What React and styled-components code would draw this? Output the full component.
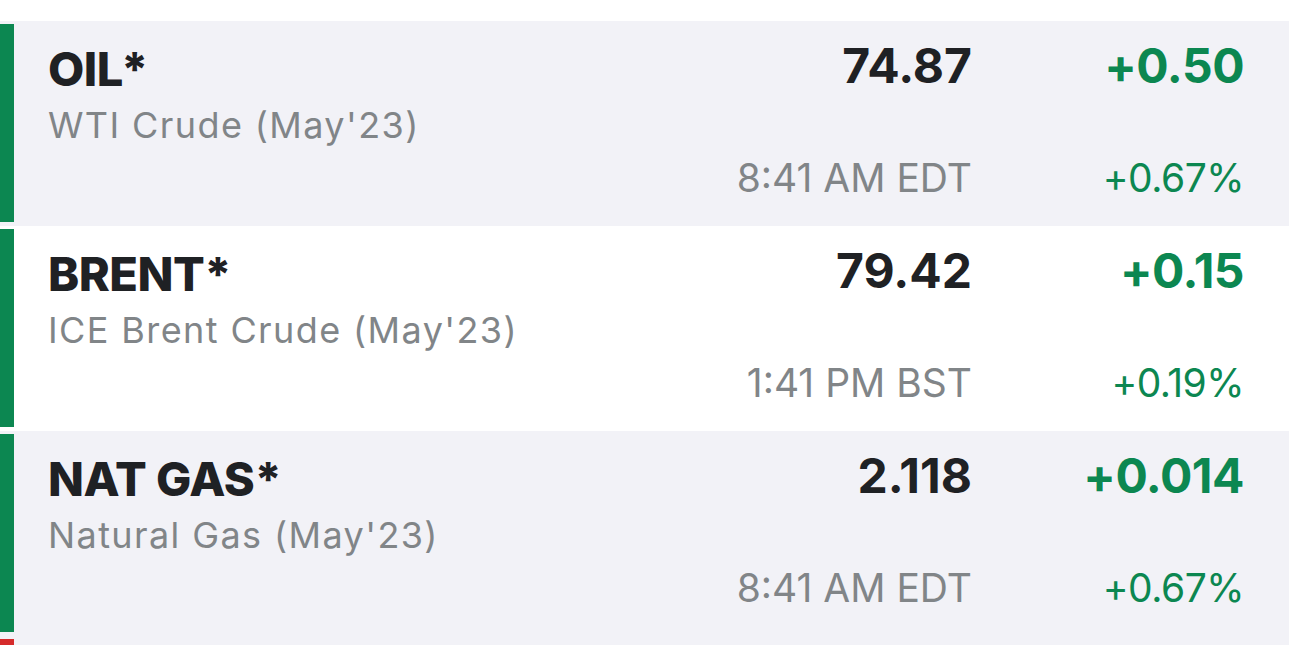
import React from "react";
import styled, { createGlobalStyle } from "styled-components";

const Global = createGlobalStyle`
  html, body { margin: 0; padding: 0; background: #ffffff; }
  body { font-family: "Inter", "Noto Sans", sans-serif; -webkit-font-smoothing: antialiased; }
`;

const List = styled.div`
  padding-top: 21px;
  display: flex;
  flex-direction: column;
`;

const Row = styled.div`
  display: flex;
  height: 205px;
  background: ${(p) => (p.$shaded ? "#f2f2f7" : "#ffffff")};
`;

const Bar = styled.div`
  width: 14px;
  flex: none;
  margin: 3px 0 4px 0;
  background: ${(p) => (p.$down ? "#d52b2b" : "#0c8751")};
`;

const Body = styled.div`
  flex: 1;
  display: grid;
  grid-template-columns: 1fr 260px 272px;
  grid-template-rows: 56px 56px 1fr;
  padding: 20px 45px 0 34px;
`;

const Symbol = styled.div`
  grid-column: 1;
  grid-row: 1;
  font-size: 47px;
  font-weight: 800;
  color: #1f2124;
  line-height: 56px;
  letter-spacing: -0.5px;
`;

const Name = styled.div`
  grid-column: 1;
  grid-row: 2;
  font-size: 36px;
  font-weight: 400;
  color: #818588;
  line-height: 56px;
  letter-spacing: 1.4px;
`;

const Price = styled.div`
  grid-column: 2;
  grid-row: 1;
  margin-top: -3px;
  text-align: right;
  font-size: 48px;
  font-weight: 700;
  color: #1f2124;
  line-height: 56px;
`;

const Change = styled(Price)`
  grid-column: 3;
  color: #0c8751;
  letter-spacing: -0.5px;
`;

const Time = styled.div`
  grid-column: 2;
  grid-row: 3;
  align-self: start;
  text-align: right;
  font-size: 39px;
  color: #818588;
  line-height: 48px;
  margin-top: 1px;
`;

const Pct = styled(Time)`
  grid-column: 3;
  color: #0c8751;
  letter-spacing: -0.5px;
`;

const data = [
  { sym: "OIL*", name: "WTI Crude (May'23)", price: "74.87", chg: "+0.50", time: "8:41 AM EDT", pct: "+0.67%" },
  { sym: "BRENT*", name: "ICE Brent Crude (May'23)", price: "79.42", chg: "+0.15", time: "1:41 PM BST", pct: "+0.19%" },
  { sym: "NAT GAS*", name: "Natural Gas (May'23)", price: "2.118", chg: "+0.014", time: "8:41 AM EDT", pct: "+0.67%" },
];

export default function App() {
  return (
    <>
      <Global />
      <List>
        {data.map((d, i) => (
          <Row key={d.sym} $shaded={i % 2 === 0}>
            <Bar />
            <Body>
              <Symbol>{d.sym}</Symbol>
              <Name>{d.name}</Name>
              <Price>{d.price}</Price>
              <Change>{d.chg}</Change>
              <Time>{d.time}</Time>
              <Pct>{d.pct}</Pct>
            </Body>
          </Row>
        ))}
        <Row $shaded={true}>
          <Bar $down />
          <Body />
        </Row>
      </List>
    </>
  );
}
